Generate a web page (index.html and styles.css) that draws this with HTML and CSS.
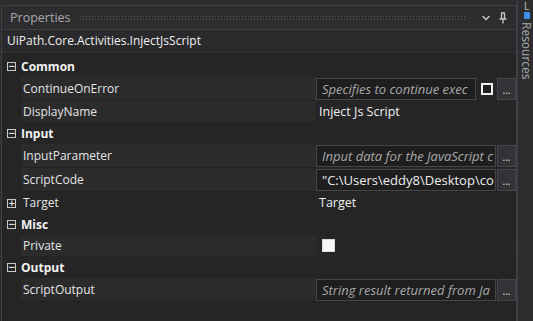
FILE: index.html
```html
<!DOCTYPE html>
<html>
<head>
  <title>Properties</title>
  <link rel="stylesheet" href="styles.css">
</head>
<body>
  <div class="panel">
    <div class="titlebar">
      <span class="title">Properties</span>
      <span class="grip"></span>
      <svg class="tb-icon" width="10" height="10" viewBox="0 0 10 10"><path d="M1.5 3 L5 6.5 L8.5 3" fill="none" stroke="#c8c8c8" stroke-width="1.3"/></svg>
      <svg class="tb-icon" width="10" height="12" viewBox="0 0 10 12"><path d="M3 1 H7 M3.5 1 V7 M6.5 1 V7 M1.5 7 H8.5 M5 7 V11.5" fill="none" stroke="#c8c8c8" stroke-width="1.3"/></svg>
    </div>
    <div class="typename">UiPath.Core.Activities.InjectJsScript</div>

    <div class="grid">
      <div class="row category">
        <span class="gutter"><span class="toggle">&minus;</span></span>
        <span class="cat-name">Common</span>
      </div>
      <div class="row prop tall">
        <span class="gutter"></span>
        <span class="name">ContinueOnError</span>
        <span class="value">
          <span class="textbox short"><span class="hint">Specifies to continue exec</span></span>
          <span class="checkbox"></span>
          <span class="dots">...</span>
        </span>
      </div>
      <div class="row prop">
        <span class="gutter"></span>
        <span class="name">DisplayName</span>
        <span class="value"><span class="plain">Inject Js Script</span></span>
      </div>

      <div class="row category">
        <span class="gutter"><span class="toggle">&minus;</span></span>
        <span class="cat-name">Input</span>
      </div>
      <div class="row prop tall">
        <span class="gutter"></span>
        <span class="name">InputParameter</span>
        <span class="value">
          <span class="textbox"><span class="hint">Input data for the JavaScript c</span></span>
          <span class="dots">...</span>
        </span>
      </div>
      <div class="row prop tall">
        <span class="gutter"></span>
        <span class="name">ScriptCode</span>
        <span class="value">
          <span class="textbox"><span class="text">"C:\Users\eddy8\Desktop\cod</span></span>
          <span class="dots">...</span>
        </span>
      </div>
      <div class="row prop expandable">
        <span class="gutter"><span class="toggle">+</span></span>
        <span class="name">Target</span>
        <span class="value"><span class="plain">Target</span></span>
      </div>

      <div class="row category">
        <span class="gutter"><span class="toggle">&minus;</span></span>
        <span class="cat-name">Misc</span>
      </div>
      <div class="row prop">
        <span class="gutter"></span>
        <span class="name">Private</span>
        <span class="value"><span class="checkbox white"></span></span>
      </div>

      <div class="row category">
        <span class="gutter"><span class="toggle">&minus;</span></span>
        <span class="cat-name">Output</span>
      </div>
      <div class="row prop tall">
        <span class="gutter"></span>
        <span class="name">ScriptOutput</span>
        <span class="value">
          <span class="textbox"><span class="hint">String result returned from Ja</span></span>
          <span class="dots">...</span>
        </span>
      </div>
    </div>
  </div>

  <div class="side">
    <span class="side-l">L</span>
    <span class="side-icon"></span>
    <span class="side-text">Resources</span>
  </div>
</body>
</html>
```

FILE: styles.css
```css
body {
  margin: 0;
  width: 533px;
  height: 321px;
  overflow: hidden;
  display: flex;
  background-color: #2d2d30;
  font-family: "Open Sans", "Noto Sans", sans-serif;
  font-size: 12px;
  color: #e6e6e6;
}
.panel {
  width: 515px;
  margin-top: 5px;
  margin-left: 1px;
  border: 1px solid #3f3f46;
  border-bottom: none;
  background-color: #252526;
  display: flex;
  flex-direction: column;
}
.titlebar {
  height: 23px;
  display: flex;
  align-items: center;
  padding: 0 8px;
  background-color: #2d2d30;
  border-bottom: 1px solid #3f3f46;
}
.title {
  color: #a8a8a8;
  font-size: 12.5px;
  margin-right: 8px;
}
.grip {
  flex: 1;
  height: 5px;
  margin-right: 8px;
  background-image: radial-gradient(circle, #58585c 0.8px, transparent 1px);
  background-size: 3px 3px;
}
.tb-icon {
  margin-left: 7px;
}
.typename {
  height: 22px;
  line-height: 22px;
  padding-left: 5px;
  font-size: 12px;
  color: #f0f0f0;
  background-color: #2a2a2c;
  border-bottom: 1px dotted #3a3a3c;
  margin-bottom: 3px;
}
.grid {
  display: flex;
  flex-direction: column;
}
.row {
  display: flex;
  align-items: stretch;
  height: 22px;
}
.row.tall {
  height: 24px;
}
.gutter {
  width: 19px;
  display: flex;
  align-items: center;
  justify-content: center;
  flex-shrink: 0;
}
.toggle {
  width: 7px;
  height: 7px;
  border: 1px solid #c8c8c8;
  font-size: 9px;
  line-height: 7px;
  text-align: center;
  font-weight: bold;
  color: #e0e0e0;
  font-family: "DejaVu Sans", sans-serif;
}
.category {
  height: 21px;
  background-color: #252526;
}
.cat-name {
  display: flex;
  align-items: center;
  font-weight: bold;
  font-size: 12px;
  color: #f2f2f2;
}
.name {
  width: 293px;
  display: flex;
  align-items: center;
  padding-left: 2px;
  background-color: #2b2b2c;
  border-bottom: 1px solid #232324;
  font-size: 12px;
  color: #e4e4e4;
}
.expandable .name {
  background-color: #252526;
}
.value {
  flex: 1;
  display: flex;
  align-items: center;
  gap: 1px;
  background-color: #262627;
  border-bottom: 1px solid #232324;
}
.expandable .value {
  background-color: #252526;
}
.plain {
  padding-left: 3px;
  font-size: 12.5px;
  color: #f0f0f0;
}
.textbox {
  width: 172px;
  height: 20px;
  padding: 0 1px 0 5px;
  display: flex;
  align-items: center;
  background-color: #1e1e1f;
  border: 1px solid #46464a;
}
.textbox.short {
  width: 152px;
}
.hint,
.text {
  display: block;
  width: 100%;
  overflow: hidden;
  white-space: nowrap;
  font-size: 13px;
}
.hint {
  font-style: italic;
  color: #a9a9a9;
}
.text {
  color: #ececec;
}
.checkbox {
  width: 8px;
  height: 8px;
  margin: 0 3px 0 4px;
  border: 2px solid #f0f0f0;
  background-color: #1e1e1f;
}
.checkbox.white {
  margin-left: 6px;
  background-color: #f8f8f8;
  width: 11px;
  height: 11px;
  border: 1px solid #dcdcdc;
}
.dots {
  width: 17px;
  height: 20px;
  overflow: hidden;
  border: 1px solid #46464a;
  background-color: #333337;
  color: #e0e0e0;
  font-size: 10px;
  line-height: 22px;
  text-align: center;
}
.side {
  flex: 1;
  background-color: #2d2d30;
  border-left: 1px solid #3f3f46;
  display: flex;
  flex-direction: column;
  align-items: center;
  padding-top: 1px;
}
.side-l {
  font-size: 10px;
  line-height: 10px;
  color: #c0c0c0;
}
.side-icon {
  width: 6px;
  height: 7px;
  margin-top: 1px;
  background-color: #3d8ee8;
}
.side-text {
  writing-mode: vertical-rl;
  font-size: 12px;
  color: #a8a8a8;
  margin-top: 3px;
}
```
